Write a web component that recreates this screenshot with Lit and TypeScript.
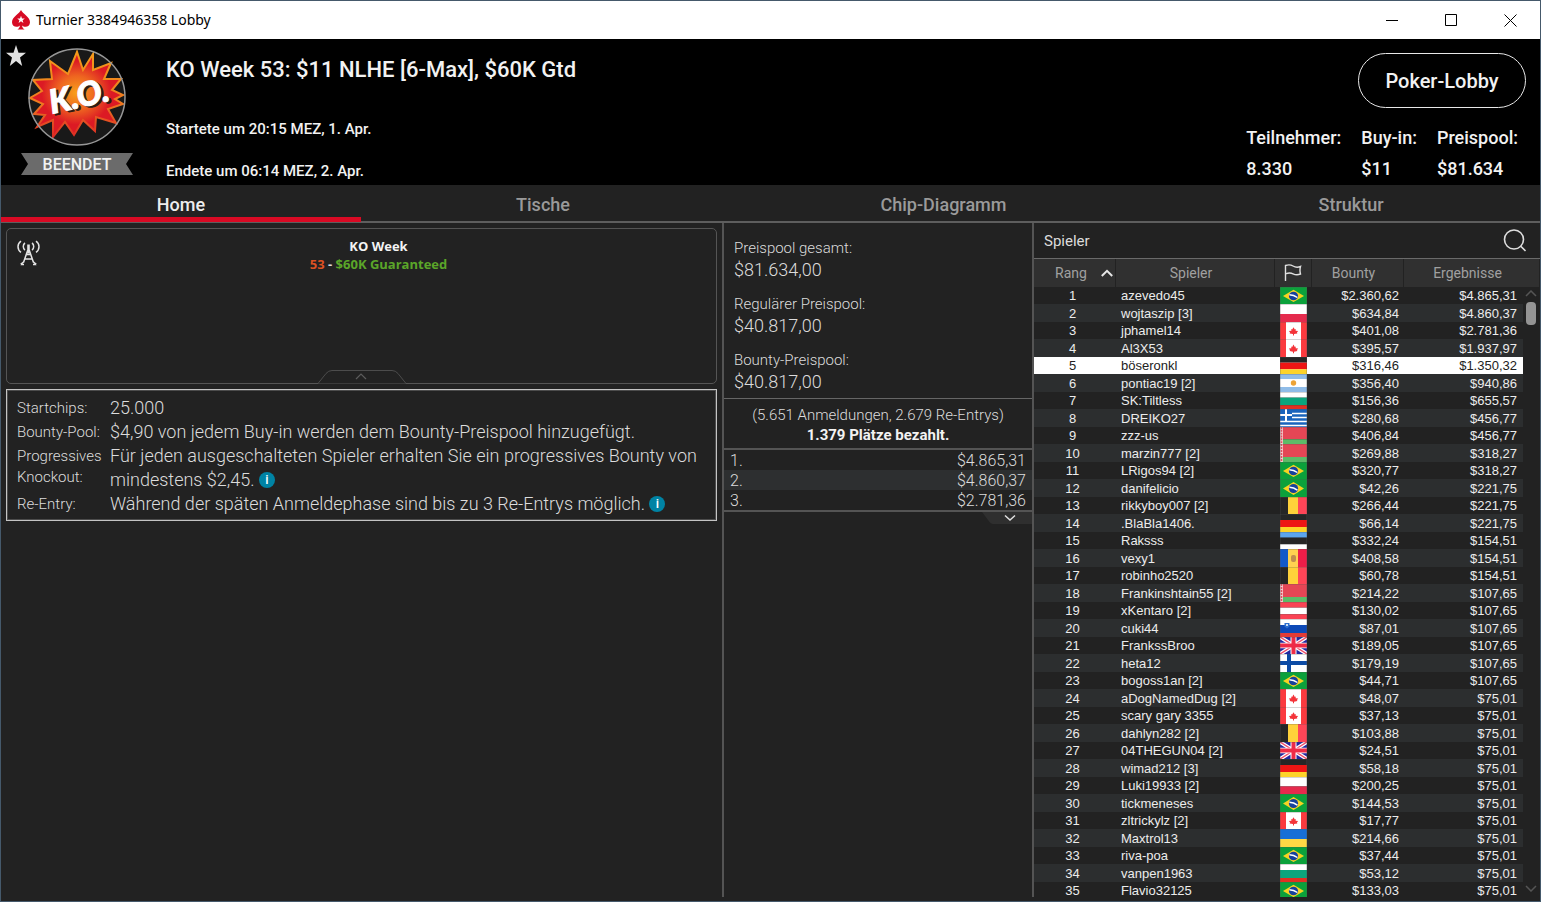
import { LitElement, html, svg, css, TemplateResult, SVGTemplateResult } from "lit";
import { customElement, property, state } from "lit/decorators.js";
import { classMap } from "lit/directives/class-map.js";

type Country =
  | "br" | "pl" | "ca" | "de" | "ar" | "bg" | "gr" | "by" | "be"
  | "ee" | "md" | "at" | "si" | "gb" | "fi" | "ua";

const COUNTRY_NAMES: Record<Country, string> = {
  br: "Brasilien", pl: "Polen", ca: "Kanada", de: "Deutschland", ar: "Argentinien",
  bg: "Bulgarien", gr: "Griechenland", by: "Belarus", be: "Belgien", ee: "Estland",
  md: "Moldau", at: "Österreich", si: "Slowenien", gb: "Großbritannien", fi: "Finnland",
  ua: "Ukraine",
};

interface Player {
  name: string;
  country: Country;
  bounty: string;
  result: string;
}

const p = (name: string, country: Country, bounty: string, result: string): Player => ({
  name, country, bounty, result,
});

const PLAYERS: Player[] = [
  p("azevedo45", "br", "$2.360,62", "$4.865,31"),
  p("wojtaszip [3]", "pl", "$634,84", "$4.860,37"),
  p("jphamel14", "ca", "$401,08", "$2.781,36"),
  p("Al3X53", "ca", "$395,57", "$1.937,97"),
  p("böseronkl", "de", "$316,46", "$1.350,32"),
  p("pontiac19 [2]", "ar", "$356,40", "$940,86"),
  p("SK:Tiltless", "bg", "$156,36", "$655,57"),
  p("DREIKO27", "gr", "$280,68", "$456,77"),
  p("zzz-us", "by", "$406,84", "$456,77"),
  p("marzin777 [2]", "by", "$269,88", "$318,27"),
  p("LRigos94 [2]", "br", "$320,77", "$318,27"),
  p("danifelicio", "br", "$42,26", "$221,75"),
  p("rikkyboy007 [2]", "be", "$266,44", "$221,75"),
  p(".BlaBla1406.", "de", "$66,14", "$221,75"),
  p("Raksss", "ee", "$332,24", "$154,51"),
  p("vexy1", "md", "$408,58", "$154,51"),
  p("robinho2520", "be", "$60,78", "$154,51"),
  p("Frankinshtain55 [2]", "by", "$214,22", "$107,65"),
  p("xKentaro [2]", "at", "$130,02", "$107,65"),
  p("cuki44", "si", "$87,01", "$107,65"),
  p("FrankssBroo", "gb", "$189,05", "$107,65"),
  p("heta12", "fi", "$179,19", "$107,65"),
  p("bogoss1an [2]", "br", "$44,71", "$107,65"),
  p("aDogNamedDug [2]", "ca", "$48,07", "$75,01"),
  p("scary gary 3355", "ca", "$37,13", "$75,01"),
  p("dahlyn282 [2]", "be", "$103,88", "$75,01"),
  p("04THEGUN04 [2]", "gb", "$24,51", "$75,01"),
  p("wimad212 [3]", "de", "$58,18", "$75,01"),
  p("Luki19933 [2]", "pl", "$200,25", "$75,01"),
  p("tickmeneses", "br", "$144,53", "$75,01"),
  p("zltrickylz [2]", "ca", "$17,77", "$75,01"),
  p("Maxtrol13", "ua", "$214,66", "$75,01"),
  p("riva-poa", "br", "$37,44", "$75,01"),
  p("vanpen1963", "bg", "$53,12", "$75,01"),
  p("Flavio32125", "br", "$133,03", "$75,01"),
];

const bands = (...parts: [string, number][]): SVGTemplateResult[] => {
  let y = 0;
  return parts.map(([color, h]) => {
    const r = svg`<rect x="0" y=${y} width="27" height=${h} fill=${color} />`;
    y += h;
    return r;
  });
};

const bars = (...parts: [string, number][]): SVGTemplateResult[] => {
  let x = 0;
  return parts.map(([color, w]) => {
    const r = svg`<rect x=${x} y="0" width=${w} height="18" fill=${color} />`;
    x += w;
    return r;
  });
};

const FLAGS: Record<Country, unknown> = {
  br: svg`
    <rect width="27" height="18" fill="#0ba13b" />
    <path d="M3 9.5 13.5 3 24 9.5 13.5 16Z" fill="#f7d322" />
    <circle cx="13.5" cy="9.5" r="4.6" fill="#17419b" />
    <path d="M9.4 8.2c3 0 5.6 1 8 3" fill="none" stroke="#fff" stroke-width="1.5" />`,
  pl: bands(["#fff", 10], ["#e52a4d", 8]),
  ca: svg`
    <rect width="27" height="18" fill="#fff" />
    <rect width="6" height="18" fill="#fb3a3f" />
    <rect x="21" width="6" height="18" fill="#fb3a3f" />
    <path d="M13.5 5.6l1.3 2.3 1-.4-.2 1.7 2.6.3-1.2 1.4.3 1.2-3.3.6v1.6h-1v-1.6l-3.3-.6.3-1.2-1.2-1.4 2.6-.3-.2-1.7 1 .4z" fill="#f4343a" />`,
  de: bands(["#262626", 6], ["#ee1514", 7], ["#fdd32a", 5]),
  ar: svg`${bands(["#8fbce8", 5], ["#fff", 8], ["#8fbce8", 5])}
    <circle cx="13.5" cy="9" r="2.7" fill="#eca336" />`,
  bg: bands(["#fff", 6], ["#0ca57d", 8], ["#e03022", 4]),
  gr: svg`
    <rect width="27" height="18" fill="#1a64bd" />
    <path d="M12 4.5h15M12 8.5h15M0 12.5h27M0 16.5h27" stroke="#fff" stroke-width="1.5" />
    <rect width="11" height="11" fill="#1a64bd" />
    <path d="M0 6h12M6 0v12" stroke="#fff" stroke-width="2" />`,
  by: svg`${bands(["#e54655", 13], ["#5dbb68", 5])}
    <rect width="3" height="18" fill="#f3c9cd" />
    <path d="M1.5 0v18" stroke="#df5160" stroke-width="1.5" stroke-dasharray="2 1" />`,
  be: bars(["#262626", 8], ["#ffd13a", 10], ["#ff4557", 9]),
  ee: bands(["#5ba5ee", 6], ["#262626", 7], ["#fff", 5]),
  md: svg`${bars(["#1259c9", 8], ["#ffd250", 10], ["#ee1d48", 9])}
    <rect x="11" y="6" width="5" height="7" rx="2" fill="#c18e4c" />`,
  at: bands(["#fa4354", 6], ["#fff", 7], ["#fa4354", 5]),
  si: svg`${bands(["#fff", 6], ["#0d49b7", 8], ["#e33b36", 4])}
    <path d="M4.5 4h5v3.5l-2.5 2-2.5-2z" fill="#2d6fd0" />
    <circle cx="7" cy="6" r="1" fill="#fff" />`,
  gb: svg`
    <rect width="27" height="18" fill="#2327a0" />
    <path d="M0 0 27 18M27 0 0 18" stroke="#fff" stroke-width="4" />
    <path d="M0 0 27 18M27 0 0 18" stroke="#f04b68" stroke-width="1.5" />
    <path d="M13.5 0v18M0 9h27" stroke="#fff" stroke-width="6" />
    <path d="M13.5 0v18M0 9h27" stroke="#ee2b47" stroke-width="4" />`,
  fi: svg`
    <rect width="27" height="18" fill="#fff" />
    <path d="M9 0v18M0 9h27" stroke="#0c4ba5" stroke-width="4" />`,
  ua: bands(["#176fd6", 10], ["#ffd845", 8]),
};

const baseStyles = css`
  *,
  *::before,
  *::after {
    box-sizing: border-box;
  }
  button {
    margin: 0;
    padding: 0;
    border: 0;
    background: none;
    color: inherit;
    font: inherit;
    cursor: pointer;
  }
  svg {
    display: block;
  }
  h1,
  h2,
  p,
  dl,
  dd {
    margin: 0;
    padding: 0;
  }
`;

@customElement("window-bar")
export class WindowBar extends LitElement {
  @property() caption = "";

  static styles = [
    baseStyles,
    css`
      :host {
        display: flex;
        align-items: center;
        height: 38px;
        padding-left: 10px;
        background: #fff;
        color: #000;
        font: 14px/20px "Noto Sans", "Open Sans", sans-serif;
      }
      .caption {
        flex: 1;
        margin-left: 5px;
      }
      .controls {
        display: flex;
      }
      .control {
        display: grid;
        place-items: center;
        width: 59px;
        height: 38px;
      }
    `,
  ];

  private control(label: string, d: string): TemplateResult {
    return html`<button class="control" aria-label=${label}>
      <svg width="13" height="13" viewBox="0 0 13 13" fill="none" stroke="#000">
        <path d=${d} />
      </svg>
    </button>`;
  }

  render() {
    return html`
      <svg width="20" height="20" viewBox="0 0 20 20">
        <path
          d="M10 0C8.5 3.5 1 7 1 12.2c0 3 2.2 4.6 4.5 4.6 1.5 0 2.6-.5 3.4-1.4-.1 1.6-.9 3-2.5 4.1h7.200c-1.6-1.1-2.4-2.5-2.5-4.1.8.9 1.9 1.4 3.4 1.4 2.3 0 4.5-1.6 4.5-4.6C19 7 11.5 3.5 10 0z"
          fill="#d70a24"
        />
        <path d="M10 5.8l1 2.7h2.8l-2.2 1.7.8 2.7-2.4-1.6-2.4 1.6.8-2.7-2.2-1.7H9z" fill="#fff" />
      </svg>
      <span class="caption">${this.caption}</span>
      <div class="controls">
        ${this.control("Minimieren", "M0 6.5h12")}
        ${this.control("Maximieren", "M.5.5h11v11H.5z")}
        ${this.control("Schließen", "M.5.5l12 12M12.5.5l-12 12")}
      </div>
    `;
  }
}

@customElement("tournament-header")
export class TournamentHeader extends LitElement {
  static styles = [
    baseStyles,
    css`
      :host {
        display: flex;
        height: 146px;
        background: #000;
        color: #f2f2f2;
        font-family: Roboto, sans-serif;
        font-weight: 500;
      }
      .star {
        position: absolute;
        margin: 6px 0 0 5px;
      }
      .badge {
        width: 112px;
        margin: 0 33px 0 20px;
        padding-top: 9px;
      }
      .logo {
        margin-left: 7px;
      }
      .ribbon {
        display: block;
        height: 22px;
        margin-top: 7px;
        background: #6b6b6b;
        clip-path: polygon(0 0, 100% 0, calc(100% - 7px) 50%, 100% 100%, 0 100%, 7px 50%);
        font-size: 16px;
        line-height: 23px;
        text-align: center;
      }
      .info {
        flex: 1;
        padding-top: 17px;
      }
      .title {
        margin-bottom: 33px;
        font-size: 22px;
        line-height: 28px;
        font-weight: 500;
      }
      .time {
        margin-bottom: 18px;
        font-size: 15px;
        line-height: 24px;
      }
      .side {
        display: flex;
        flex-direction: column;
        align-items: flex-end;
        padding: 14px 14px 0 0;
      }
      .lobby {
        width: 168px;
        height: 55px;
        border: 1px solid #e8e8e8;
        border-radius: 28px;
        font-size: 20px;
      }
      .stats {
        display: flex;
        gap: 20px;
        margin: 14px 8px 0 0;
        font-size: 18px;
        line-height: 31px;
      }
    `,
  ];

  private stat(name: string, value: string) {
    return html`<div><dt>${name}</dt><dd>${value}</dd></div>`;
  }

  render() {
    return html`
      <button class="star" aria-label="Als Favorit markieren">
        <svg width="20" height="21" viewBox="0 0 20 21">
          <path d="M10 0l2.5 7.8H20l-6 4.7L16.2 21 10 15.9 3.8 21 6 12.5 0 7.8h7.5z" fill="#e2e2e2" />
        </svg>
      </button>
      <div class="badge">
        <svg class="logo" width="98" height="98" viewBox="0 0 98 98">
          <defs>
            <radialGradient id="glow" cx="50%" cy="48%" r="50%">
              <stop offset="0" stop-color="#f8a01c" />
              <stop offset=".4" stop-color="#ee6420" />
              <stop offset=".75" stop-color="#dc1a24" />
            </radialGradient>
            <linearGradient id="edge" x1="0" y1="0" x2="0" y2="1">
              <stop offset="0" stop-color="#f49a1a" />
              <stop offset=".6" stop-color="#ee7a20" />
              <stop offset="1" stop-color="#dc2a24" />
            </linearGradient>
          </defs>
          <circle cx="49" cy="49" r="48" fill="#191919" />
          <path
            d="M22 13L40 26 49 4 55 22 65 6 65 22 83 15 76 31 93 31 84 42 95 47 87 51 95 56 80 61 88 75 68 69 67 83 55 72 46 87 37 74 25 89 25 72 9 79 17 67 6 66 15 56 2 50 14 43 5 32 24 31Z"
            fill="url(#glow)"
            stroke="url(#edge)"
            stroke-width="2"
          />
          <circle cx="49" cy="49" r="48" fill="none" stroke="#979797" stroke-width="1.5" />
          <g
            transform="rotate(-13 49 49)"
            font-family="Lato, 'Open Sans', sans-serif"
            font-weight="900"
            font-style="italic"
            font-size="33"
            text-anchor="middle"
          >
            <text x="53" y="62" fill="#2a1a14" stroke="#2a1a14" aria-hidden="true">K.O.</text>
            <text x="51" y="60" fill="#fff" stroke="#fff">K.O.</text>
          </g>
        </svg>
        <span class="ribbon">BEENDET</span>
      </div>
      <div class="info">
        <h1 class="title">KO Week 53: $11 NLHE [6-Max], $60K Gtd</h1>
        <p class="time">Startete um 20:15 MEZ, 1. Apr.</p>
        <p class="time">Endete um 06:14 MEZ, 2. Apr.</p>
      </div>
      <div class="side">
        <button class="lobby">Poker-Lobby</button>
        <dl class="stats">
          ${this.stat("Teilnehmer:", "8.330")} ${this.stat("Buy-in:", "$11")}
          ${this.stat("Preispool:", "$81.634")}
        </dl>
      </div>
    `;
  }
}

@customElement("tab-strip")
export class TabStrip extends LitElement {
  @state() private active = 0;
  private tabs = ["Home", "Tische", "Chip-Diagramm", "Struktur"];

  static styles = [
    baseStyles,
    css`
      :host {
        display: grid;
        grid-template-columns: 360fr 364fr 437fr 378fr;
        height: 38px;
        background: linear-gradient(#5e5e5e, #5e5e5e) left bottom / 100% 2px no-repeat #222;
        font: 500 18px/32px Roboto, sans-serif;
        color: #9a9a9a;
      }
      .tab {
        height: 37px;
        padding-top: 4px;
        border-bottom: 5px solid transparent;
      }
      .tab.active {
        border-color: #d90a24;
        color: #ededed;
      }
    `,
  ];

  render() {
    return this.tabs.map(
      (t, i) => html`<button
        class=${classMap({ tab: true, active: i === this.active })}
        role="tab"
        aria-selected=${i === this.active}
        @click=${() => (this.active = i)}
      >
        ${t}
      </button>`
    );
  }
}

@customElement("tournament-details")
export class TournamentDetails extends LitElement {
  static styles = [
    baseStyles,
    css`
      :host {
        display: flex;
        flex-direction: column;
        gap: 5px;
        padding: 5px 5px 0 5px;
        color: #dcdcdc;
        font-family: Roboto, sans-serif;
      }
      .banner {
        position: relative;
        height: 156px;
        padding: 8px 0 0 34px;
        border: 1px solid #555;
        border-radius: 5px;
        font: 700 13px/18px "Open Sans", "Noto Sans", sans-serif;
        text-align: center;
      }
      .series {
        color: #f4f4f4;
        font: inherit;
      }
      .number {
        color: #dc5122;
      }
      .prize {
        color: #5ba629;
      }
      .antenna {
        position: absolute;
        left: 10px;
        top: 11px;
      }
      .collapse {
        position: absolute;
        left: 50%;
        bottom: -1px;
        transform: translateX(-50%);
      }
      .facts {
        display: grid;
        grid-template-columns: 93px 1fr;
        padding: 6px 10px 4px;
        border: 1px solid #c4c4c4;
        box-shadow: inset 0 0 0 1px #4c4c4c;
        font-weight: 300;
      }
      .fact-name {
        padding-top: 2px;
        font-size: 15px;
        line-height: 21px;
      }
      .fact-value {
        font-size: 18px;
        line-height: 24px;
      }
      .hint {
        display: inline-block;
        width: 16px;
        height: 16px;
        vertical-align: 2px;
        border-radius: 8px;
        background: #0083a4;
        color: #fff;
        font-size: 13px;
        font-weight: 500;
        line-height: 16px;
        text-align: center;
      }
    `,
  ];

  private hint() {
    return html`<button class="hint" aria-label="Mehr Informationen">i</button>`;
  }

  render() {
    return html`
      <section class="banner">
        <svg class="antenna" width="24" height="26" viewBox="0 0 24 26" fill="none" stroke="#e4e4e4" stroke-width="1.5">
          <path d="M10.8 10L6.500 22.500M12.200 10L16.500 22.500M9 14.500h5M7.800 19h7.400M6.500 22L3.700 24.300M16.500 22l2.800 2.300M3.500 24.500h3.500M16 24.500h3.500" />
          <path d="M11.500 4.500v9" stroke-width="2.600" />
          <path d="M8 3c-2.300 1.500-2.300 5.500 0 7M15 3c2.300 1.500 2.300 5.500 0 7M4 1.200C0 4 0 9.500 4 12.300M19 1.200c4 2.800 4 8.300 0 11.100" />
        </svg>
        <h2 class="series">KO Week</h2>
        <p><span class="number">53</span> - <span class="prize">$60K Guaranteed</span></p>
        <button class="collapse" aria-label="Einklappen">
          <svg width="88" height="14" viewBox="0 0 88 14">
            <path d="M0 13.5L8 3.5Q10.5.5 14 .5h60q3.5 0 6 3l8 10" fill="#222" stroke="#4c4c4c" />
            <path d="M38 9l5-5 5 5" fill="none" stroke="#5c5c5c" stroke-width="1.2" />
          </svg>
        </button>
      </section>
      <dl class="facts">
        <dt class="fact-name">Startchips:</dt>
        <dd class="fact-value">25.000</dd>
        <dt class="fact-name">Bounty-Pool:</dt>
        <dd class="fact-value">$4,90 von jedem Buy-in werden dem Bounty-Preispool hinzugefügt.</dd>
        <dt class="fact-name">Progressives Knockout:</dt>
        <dd class="fact-value">
          Für jeden ausgeschalteten Spieler erhalten Sie ein progressives Bounty von mindestens
          $2,45. ${this.hint()}
        </dd>
        <dt class="fact-name">Re-Entry:</dt>
        <dd class="fact-value">
          Während der späten Anmeldephase sind bis zu 3 Re-Entrys möglich. ${this.hint()}
        </dd>
      </dl>
    `;
  }
}

@customElement("prize-summary")
export class PrizeSummary extends LitElement {
  private pools = [
    ["Preispool gesamt:", "$81.634,00"],
    ["Regulärer Preispool:", "$40.817,00"],
    ["Bounty-Preispool:", "$40.817,00"],
  ];
  private places = ["$4.865,31", "$4.860,37", "$2.781,36"];

  static styles = [
    baseStyles,
    css`
      :host {
        display: block;
        border: solid #545454;
        border-width: 0 2px;
        color: #dcdcdc;
        font: 300 15px/20px Roboto, sans-serif;
      }
      .pools {
        display: grid;
        gap: 12px;
        padding: 14px 10px 5px;
        border-bottom: 1px solid #666;
      }
      .pool {
        line-height: 22px;
      }
      .amount {
        font-size: 18px;
      }
      .entries {
        padding: 6px 0 3px;
        border-bottom: 2px solid #545454;
        text-align: center;
      }
      .paid {
        color: #f2f2f2;
        font-weight: 700;
      }
      .places {
        width: 100%;
        border-collapse: separate;
        border-spacing: 0;
        border-bottom: 2px solid #545454;
        font-size: 16px;
        line-height: 18px;
      }
      .places th,
      .places td {
        padding: 2px 6px 0;
        font-weight: 300;
        text-align: left;
      }
      .places td {
        text-align: right;
      }
      .places tr:nth-child(even) {
        background: #2d2f30;
      }
      .expand {
        display: block;
        margin-left: auto;
      }
    `,
  ];

  render() {
    return html`
      <dl class="pools">
        ${this.pools.map(
          ([n, v]) => html`<div class="pool"><dt>${n}</dt><dd class="amount">${v}</dd></div>`
        )}
      </dl>
      <div class="entries">
        <p>(5.651 Anmeldungen, 2.679 Re-Entrys)</p>
        <p class="paid">1.379 Plätze bezahlt.</p>
      </div>
      <table class="places">
        <tbody>
          ${this.places.map((v, i) => html`<tr><th scope="row">${i + 1}.</th><td>${v}</td></tr>`)}
        </tbody>
      </table>
      <button class="expand" aria-label="Alle Plätze anzeigen">
        <svg width="50" height="12" viewBox="0 0 50 12">
          <path d="M0 0h50v12H11Q9 12 7.5 10z" fill="#2f2f2f" />
          <path d="M23 3.5l5 4.5 5-4.5" fill="none" stroke="#e0e0e0" stroke-width="1.5" />
        </svg>
      </button>
    `;
  }
}

@customElement("player-list")
export class PlayerList extends LitElement {
  @state() private selected = 4;

  static styles = [
    baseStyles,
    css`
      :host {
        display: flex;
        flex-direction: column;
        min-height: 0;
        color: #ececec;
        font-family: Roboto, sans-serif;
      }
      .bar {
        display: flex;
        align-items: center;
        justify-content: space-between;
        height: 36px;
        flex: none;
        padding: 0 13px 0 10px;
        border-bottom: 1px solid #6a6a6a;
      }
      .heading {
        font-size: 15px;
        font-weight: 400;
        color: #dcdcdc;
      }
      .scroller {
        position: relative;
        flex: 1;
        min-height: 0;
        overflow: hidden;
      }
      .players {
        width: 100%;
        table-layout: fixed;
        border-collapse: separate;
        border-spacing: 0;
        font: 13px/17px "Liberation Sans", Arial, sans-serif;
      }
      .col-rank { width: 82px; }
      .col-flag { width: 37px; }
      .col-bounty { width: 92px; }
      .col-result { width: 136px; }
      .players th {
        height: 28px;
        padding: 0;
        background: #303030;
        border-right: 1px solid #222;
        color: #a0a0a0;
        font: 400 14px/27px Roboto, sans-serif;
      }
      .sort {
        display: flex;
        align-items: center;
        gap: 14px;
        padding-left: 21px;
      }
      .sort-flag {
        display: block;
        margin: 0 auto;
      }
      .players .head-name,
      .players .head-bounty,
      .players .head-result { padding-right: 8px; }
      .players td {
        height: 17px;
        padding: 0;
        overflow: hidden;
        white-space: nowrap;
      }
      .players tr:nth-child(even) td {
        height: 18px;
        background: #2c2e2f;
      }
      .players tr.selected td {
        background: #fff;
        color: #222;
      }
      .players .rank {
        padding-right: 5px;
        text-align: center;
      }
      .players .name { padding-left: 5px; }
      .players .flag { padding: 0 5px; }
      .players .bounty {
        padding-right: 5px;
        text-align: right;
      }
      .players .result {
        padding-right: 23px;
        text-align: right;
      }
      .players .flag svg {
        width: 27px;
        height: 17px;
      }
      .players tr:nth-child(even) .flag svg {
        height: 18px;
      }
      .scrollbar {
        position: absolute;
        top: 28px;
        right: 0;
        bottom: 0;
        width: 17px;
        display: flex;
        flex-direction: column;
        align-items: center;
        padding: 3px 1px 5px 0;
        background: #222;
      }
      .thumb {
        width: 10px;
        height: 23px;
        margin: 5px 0 auto;
        border-radius: 4px;
        background: #949494;
      }
    `,
  ];

  private arrow(label: string, d: string) {
    return html`<button aria-label=${label}>
      <svg width="12" height="7" viewBox="0 0 12 7"><path d=${d} fill="none" stroke="#555" stroke-width="1.5" /></svg>
    </button>`;
  }

  render() {
    return html`
      <div class="bar">
        <h2 class="heading">Spieler</h2>
        <button aria-label="Spieler suchen">
          <svg width="24" height="24" viewBox="0 0 24 24" fill="none" stroke="#dedede" stroke-width="1.6">
            <circle cx="11" cy="10.5" r="9.5" />
            <path d="M17.5 17l5 5" />
          </svg>
        </button>
      </div>
      <div class="scroller">
        <table class="players">
          <colgroup>
            <col class="col-rank" /><col /><col class="col-flag" /><col class="col-bounty" /><col class="col-result" />
          </colgroup>
          <thead>
            <tr>
              <th scope="col" aria-sort="ascending">
                <button class="sort">
                  Rang
                  <svg width="12" height="8" viewBox="0 0 12 8"><path d="M.8 7L6 1.8 11.2 7" fill="none" stroke="#e6e6e6" stroke-width="2" /></svg>
                </button>
              </th>
              <th class="head-name" scope="col"><button>Spieler</button></th>
              <th scope="col">
                <button class="sort-flag" aria-label="Land">
                  <svg width="18" height="18" viewBox="0 0 18 18" fill="none" stroke="#e0e0e0" stroke-width="1.4">
                    <path d="M1.5 17V1.5C4.5.5 6.5.5 9 2s5 1.500 7.5.5c-.7 2.5-.7 5 0 7.5-2.5 1-5 1-7.5-.2s-4.5-1-7.5 0" />
                  </svg>
                </button>
              </th>
              <th class="head-bounty" scope="col"><button>Bounty</button></th>
              <th class="head-result" scope="col"><button>Ergebnisse</button></th>
            </tr>
          </thead>
          <tbody>
            ${PLAYERS.map(
              (pl, i) => html`<tr
                class=${classMap({ selected: i === this.selected })}
                @click=${() => (this.selected = i)}
              >
                <td class="rank">${i + 1}</td>
                <td class="name">${pl.name}</td>
                <td class="flag">
                  <svg viewBox="0 0 27 18" preserveAspectRatio="none" role="img" aria-label=${COUNTRY_NAMES[pl.country]}>
                    ${FLAGS[pl.country]}
                    <path d="M0 0v18M27 0v18M0 0h27" stroke="#555" stroke-opacity=".5" />
                  </svg>
                </td>
                <td class="bounty">${pl.bounty}</td>
                <td class="result">${pl.result}</td>
              </tr>`
            )}
          </tbody>
        </table>
        <div class="scrollbar">
          ${this.arrow("Nach oben", "M1 6l5-5 5 5")}
          <div class="thumb"></div>
          ${this.arrow("Nach unten", "M1 1l5 5 5-5")}
        </div>
      </div>
    `;
  }
}

@customElement("app-root")
export class AppRoot extends LitElement {
  static styles = [
    baseStyles,
    css`
      :host {
        display: flex;
        flex-direction: column;
        height: 100vh;
        box-sizing: border-box;
        border: 1px solid #45596b;
        background: #222;
      }
      .content {
        flex: 1;
        min-height: 0;
        display: grid;
        grid-template-columns: 721fr 312fr 506fr;
        grid-template-rows: minmax(0, 1fr);
        padding-bottom: 4px;
      }
    `,
  ];

  render() {
    return html`
      <window-bar caption="Turnier 3384946358 Lobby"></window-bar>
      <tournament-header></tournament-header>
      <tab-strip role="tablist"></tab-strip>
      <main class="content">
        <tournament-details></tournament-details>
        <prize-summary></prize-summary>
        <player-list></player-list>
      </main>
    `;
  }
}
